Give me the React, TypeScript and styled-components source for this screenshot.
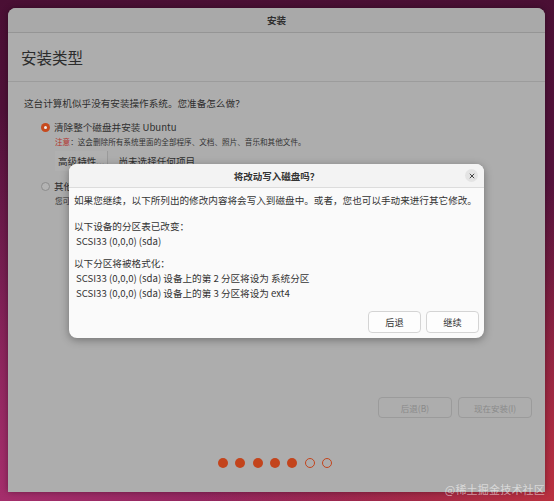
import React from "react";
import styled, { createGlobalStyle } from "styled-components";

const GlobalStyle = createGlobalStyle`
  html, body {
    margin: 0;
    padding: 0;
    width: 554px;
    height: 501px;
    overflow: hidden;
    font-family: "Noto Sans CJK SC", "Noto Sans", sans-serif;
  }
`;

const Desktop = styled.div`
  position: relative;
  width: 554px;
  height: 501px;
  padding: 8px 8px 0 8px;
  box-sizing: border-box;
  background:
    radial-gradient(ellipse at 100% 100%, rgba(196, 52, 60, 0.85) 0%, rgba(196, 52, 60, 0) 45%),
    radial-gradient(ellipse at 0% 100%, rgba(168, 48, 110, 0.9) 0%, rgba(168, 48, 110, 0) 55%),
    linear-gradient(180deg, #4a0f34 0%, #5a1440 55%, #821e53 100%);
`;

const Window = styled.div`
  position: relative;
  width: 537px;
  height: 484px;
  display: flex;
  flex-direction: column;
  background: #adadad;
  border-radius: 8px 8px 0 0;
  box-shadow: 0 0 6px rgba(0, 0, 0, 0.35);
  color: #333;
`;

const TitleBar = styled.div`
  height: 24px;
  flex: none;
  display: flex;
  align-items: center;
  justify-content: center;
  background: #a9a9a9;
  border-bottom: 1px solid #959595;
  border-radius: 8px 8px 0 0;
  font-size: 9.5px;
  font-weight: 700;
  color: #2f2f2f;
`;

const Heading = styled.div`
  height: 48px;
  flex: none;
  display: flex;
  align-items: center;
  padding-left: 13px;
  font-size: 15.5px;
  color: #2c2c2c;
  border-bottom: 1px solid #9c9c9c;
`;

const Content = styled.div`
  flex: 1;
  padding: 14px 0 0 16px;
  display: flex;
  flex-direction: column;
`;

const Question = styled.div`
  font-size: 9.6px;
  line-height: 14px;
  color: #2f2f2f;
  margin-bottom: 10px;
`;

const Option = styled.div`
  display: flex;
  align-items: center;
  gap: 4px;
  padding-left: 17px;
  font-size: 9.6px;
  line-height: 14px;
  color: #2f2f2f;
`;

const Radio = styled.span<{ checked?: boolean }>`
  width: 9px;
  height: 9px;
  border-radius: 50%;
  box-sizing: border-box;
  flex: none;
  background: ${({ checked }) => (checked ? "#c64a1e" : "#b3b3b3")};
  border: ${({ checked }) => (checked ? "none" : "1px solid #8c8c8c")};
  display: flex;
  align-items: center;
  justify-content: center;
  &::after {
    content: "";
    width: 3px;
    height: 3px;
    border-radius: 50%;
    background: ${({ checked }) => (checked ? "#eee" : "transparent")};
  }
`;

const Note = styled.div`
  padding-left: 31px;
  font-size: 7.6px;
  line-height: 12px;
  margin-top: 2px;
  color: #333;
`;

const Warn = styled.span`
  color: #b2322c;
`;

const Actions = styled.div`
  display: flex;
  align-items: center;
  gap: 10px;
  padding-left: 31px;
  margin: 3px 0 8px;
  font-size: 9.6px;
  color: #2f2f2f;
`;

const FlatButton = styled.div`
  padding: 2px 3px;
  height: 16px;
  display: flex;
  align-items: center;
  border-right: 1px solid #9a9a9a;
  background: #b0b0b0;
`;

const Footer = styled.div`
  flex: none;
  display: flex;
  justify-content: flex-end;
  gap: 6px;
  padding-right: 13px;
`;

const GhostButton = styled.div<{ w: number }>`
  width: ${({ w }) => w}px;
  height: 21px;
  box-sizing: border-box;
  border: 1px solid #9b9b9b;
  border-radius: 4px;
  display: flex;
  align-items: center;
  justify-content: center;
  font-size: 8.5px;
  color: #8a8a8a;
`;

const Dots = styled.div`
  flex: none;
  height: 10px;
  margin: 40px 0 24px;
  display: flex;
  align-items: center;
  justify-content: center;
  gap: 7.3px;
  padding-right: 3px;
`;

const Dot = styled.span<{ filled?: boolean }>`
  width: 10px;
  height: 10px;
  border-radius: 50%;
  box-sizing: border-box;
  background: ${({ filled }) => (filled ? "#c3441c" : "transparent")};
  border: ${({ filled }) => (filled ? "none" : "1px solid #c3441c")};
`;

const Dialog = styled.div`
  position: absolute;
  left: 61px;
  top: 156px;
  width: 415px;
  height: 174px;
  display: flex;
  flex-direction: column;
  background: #fafafa;
  border-radius: 8px;
  box-shadow: 0 2px 8px rgba(0, 0, 0, 0.35);
  overflow: hidden;
  color: #333;
`;

const DialogHeader = styled.div`
  position: relative;
  height: 23px;
  flex: none;
  display: flex;
  align-items: center;
  justify-content: center;
  background: #f3f3f3;
  border-bottom: 1px solid #dcdcdc;
  font-size: 9.5px;
  font-weight: 700;
  color: #333;
`;

const CloseButton = styled.div`
  position: absolute;
  right: 6px;
  top: 5px;
  width: 13px;
  height: 13px;
  border-radius: 50%;
  background: #e4e4e4;
  display: flex;
  align-items: center;
  justify-content: center;
`;

const DialogBody = styled.div`
  flex: 1;
  padding: 5px 5px 0 5px;
  font-size: 9.6px;
  line-height: 15px;
`;

const Para = styled.div<{ gap?: number }>`
  margin-top: ${({ gap }) => gap ?? 0}px;
`;

const Line = styled.div`
  padding-left: 2px;
`;

const DialogFooter = styled.div`
  flex: none;
  display: flex;
  justify-content: flex-end;
  gap: 5px;
  padding: 0 5px 5px 0;
`;

const DialogButton = styled.div`
  width: 53px;
  height: 22px;
  box-sizing: border-box;
  border: 1px solid #d4d4d4;
  border-radius: 4px;
  background: #fdfdfd;
  display: flex;
  align-items: center;
  justify-content: center;
  font-size: 9.2px;
  color: #333;
`;

const Watermark = styled.div`
  position: absolute;
  right: 9px;
  bottom: 4px;
  font-size: 11px;
  color: rgba(255, 255, 255, 0.55);
  letter-spacing: 0.2px;
`;

export default function App() {
  return (
    <>
      <GlobalStyle />
      <Desktop>
        <Window>
          <TitleBar>安装</TitleBar>
          <Heading>安装类型</Heading>
          <Content>
            <Question>这台计算机似乎没有安装操作系统。您准备怎么做？</Question>
            <Option>
              <Radio checked />
              清除整个磁盘并安装 Ubuntu
            </Option>
            <Note>
              <Warn>注意</Warn>：这会删除所有系统里面的全部程序、文档、照片、音乐和其他文件。
            </Note>
            <Actions>
              <FlatButton>高级特性...</FlatButton>
              <span>尚未选择任何项目</span>
            </Actions>
            <Option>
              <Radio />
              其他选项
            </Option>
            <Note>您可以自己创建、调整分区，或者为 Ubuntu 选择多个分区。</Note>
          </Content>
          <Footer>
            <GhostButton w={74}>后退(B)</GhostButton>
            <GhostButton w={74}>现在安装(I)</GhostButton>
          </Footer>
          <Dots>
            {[0, 1, 2, 3, 4, 5, 6].map((i) => (
              <Dot key={i} filled={i < 5} />
            ))}
          </Dots>

          <Dialog>
            <DialogHeader>
              将改动写入磁盘吗？
              <CloseButton>
                <svg width="6" height="6" viewBox="0 0 6 6">
                  <path d="M0.8 0.8 L5.2 5.2 M5.2 0.8 L0.8 5.2" stroke="#444" strokeWidth="1" />
                </svg>
              </CloseButton>
            </DialogHeader>
            <DialogBody>
              <Para>如果您继续，以下所列出的修改内容将会写入到磁盘中。或者，您也可以手动来进行其它修改。</Para>
              <Para gap={11}>以下设备的分区表已改变：</Para>
              <Line>SCSI33 (0,0,0) (sda)</Line>
              <Para gap={7}>以下分区将被格式化：</Para>
              <Line>SCSI33 (0,0,0) (sda) 设备上的第 2 分区将设为 系统分区</Line>
              <Line>SCSI33 (0,0,0) (sda) 设备上的第 3 分区将设为 ext4</Line>
            </DialogBody>
            <DialogFooter>
              <DialogButton>后退</DialogButton>
              <DialogButton>继续</DialogButton>
            </DialogFooter>
          </Dialog>
        </Window>
        <Watermark>@稀土掘金技术社区</Watermark>
      </Desktop>
    </>
  );
}
